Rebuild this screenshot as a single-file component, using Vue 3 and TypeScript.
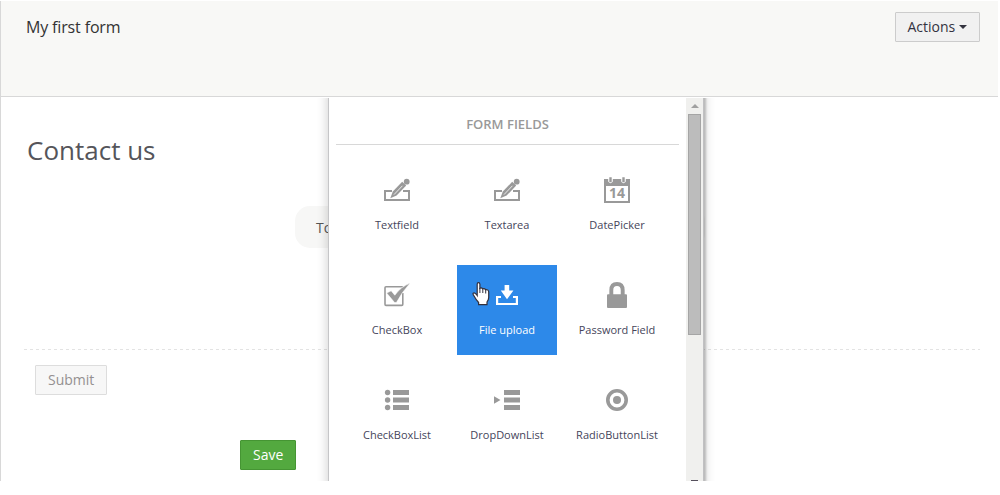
<script setup lang="ts">
import { ref } from 'vue'

type IconName = 'edit' | 'calendar' | 'check' | 'upload' | 'lock' | 'list' | 'dropdown' | 'radio'

interface FieldType {
  label: string
  icon: IconName
}

const fields: FieldType[] = [
  { label: 'Textfield', icon: 'edit' },
  { label: 'Textarea', icon: 'edit' },
  { label: 'DatePicker', icon: 'calendar' },
  { label: 'CheckBox', icon: 'check' },
  { label: 'File upload', icon: 'upload' },
  { label: 'Password Field', icon: 'lock' },
  { label: 'CheckBoxList', icon: 'list' },
  { label: 'DropDownList', icon: 'dropdown' },
  { label: 'RadioButtonList', icon: 'radio' },
]

const active = ref('File upload')
</script>

<template>
  <div class="page">
    <header class="topbar">
      <span class="form-name">My first form</span>
      <button class="btn actions" type="button">Actions<i class="caret"></i></button>
    </header>

    <main class="editor">
      <h1 class="heading">Contact us</h1>
      <div class="drop-hint">To</div>
      <div class="divider"></div>
      <button class="btn submit" type="button">Submit</button>
      <button class="btn save" type="button">Save</button>
    </main>

    <div class="panel-clip">
      <aside class="panel">
        <div class="panel-body">
          <h2 class="panel-title">FORM FIELDS</h2>
          <div class="grid">
            <div
              v-for="field in fields"
              :key="field.label"
              class="cell"
              :class="{ active: field.label === active }"
              @mouseenter="active = field.label"
            >
              <svg class="icon" width="26" height="26" viewBox="0 0 26 26">
                <template v-if="field.icon === 'edit'">
                  <path d="M8 14H1V23H25V14H19" fill="none" stroke="currentColor" stroke-width="2" />
                  <path d="M6.3 21.2L8.8 14.6L18.2 4.8L22.2 8.6L12.6 18.6Z" fill="currentColor" />
                  <path d="M10 17.6L18.4 8.8" stroke="#fff" stroke-width=".8" />
                  <circle cx="22.7" cy="4.7" r="2.9" fill="currentColor" />
                </template>
                <template v-else-if="field.icon === 'calendar'">
                  <path d="M0 2H26V26H0ZM2 9V24H24V9Z" fill="currentColor" fill-rule="evenodd" />
                  <path d="M4.2 0V4.5Q6.5 8 8.8 4.5V0ZM17.2 0V4.5Q19.5 8 21.8 4.5V0Z" fill="#fff" />
                  <path d="M6.5 .3V5.2M19.5 .3V5.2" stroke="currentColor" stroke-width="2.4" />
                  <text x="13" y="21.3" text-anchor="middle" class="day">14</text>
                </template>
                <template v-else-if="field.icon === 'check'">
                  <path d="M18.8 6V5.6Q18.8 4.8 18 4.8H2Q1 4.8 1 5.8V22.2Q1 23.4 2 23.4H17.8Q18.8 23.4 18.8 22.2V11" fill="none" stroke="currentColor" stroke-width="1.6" />
                  <path d="M2.6 11L7.2 8.8L10.8 13.2Q16.5 5 26.2 1Q17.6 10.5 12.4 20.6H10.6Z" fill="currentColor" stroke="#fff" stroke-width=".6" />
                </template>
                <template v-else-if="field.icon === 'upload'">
                  <path d="M7 15H3.1V22H22.9V15H19" fill="none" stroke="currentColor" stroke-width="2.2" />
                  <path d="M10.6 3H15.2V8.6H19.4L13 17.3L6.8 8.6H10.6Z" fill="currentColor" />
                </template>
                <template v-else-if="field.icon === 'lock'">
                  <path d="M7.3 14V8.3Q7.3 2 13 2T18.7 8.3V14" fill="none" stroke="currentColor" stroke-width="3.9" />
                  <rect x="3" y="12.2" width="20" height="13.8" rx="1" fill="currentColor" />
                </template>
                <template v-else-if="field.icon === 'list'">
                  <path d="M9 3H25V8H9ZM9 10.5H25V15.5H9ZM9 18H25V23H9Z" fill="currentColor" />
                  <circle cx="3.6" cy="5.5" r="2.7" fill="currentColor" />
                  <circle cx="3.6" cy="13" r="2.7" fill="currentColor" />
                  <circle cx="3.6" cy="20.5" r="2.7" fill="currentColor" />
                </template>
                <template v-else-if="field.icon === 'dropdown'">
                  <path d="M10 3H26V8H10ZM10 10.5H26V15.5H10ZM10 18H26V23H10ZM0 9.3L6.5 13L0 16.7Z" fill="currentColor" />
                </template>
                <template v-else>
                  <circle cx="13" cy="13" r="9.2" fill="none" stroke="currentColor" stroke-width="3.6" />
                  <circle cx="13" cy="13" r="4" fill="currentColor" />
                </template>
              </svg>
              <span class="label">{{ field.label }}</span>
            </div>
          </div>
        </div>
        <div class="scrollbar">
          <i class="arrow"></i>
          <div class="thumb"></div>
          <i class="mark"></i>
        </div>
      </aside>
    </div>

    <svg class="pointer" width="18" height="24" viewBox="0 0 18 24">
      <path
        d="M5.2 13.5V2.2Q5.2 .7 6.5 .7T7.9 2.2V6.3Q9.5 5.2 10.7 6.8Q12.5 6 13.6 7.6Q16.7 7.4 16.7 10V15.5Q16.7 17.5 15 20V22.6H6.6V20.5Q4 17.5 2.5 14.7Q.4 12 1.2 11.2Q2.8 10 5.2 13.5Z"
        fill="#fff" stroke="#33303c" stroke-width="1.2"
      />
      <path d="M7.9 6V11M10.8 7V11M13.7 8V11.5" stroke="#33303c" stroke-width="1" />
    </svg>
  </div>
</template>

<style>
body {
  margin: 0;
  background: #fff;
}
</style>

<style scoped>
.page {
  position: relative;
  box-sizing: border-box;
  width: 998px;
  height: 481px;
  padding-top: 1px;
  overflow: hidden;
  font-family: "Open Sans", "Noto Sans", sans-serif;
  color: #333;
}
.topbar {
  box-sizing: border-box;
  height: 96px;
  display: flex;
  justify-content: space-between;
  align-items: flex-start;
  padding: 11px 18px 0 25px;
  background: #f8f8f6;
  border-left: 1px solid #d8d8d8;
  border-bottom: 1px solid #d8d8d8;
}
.form-name {
  font-size: 16px;
  line-height: 30px;
  letter-spacing: -0.15px;
}
.btn {
  box-sizing: border-box;
  display: block;
  height: 30px;
  padding: 0 12px;
  border: 1px solid #ccc;
  border-radius: 1px;
  background: #f1f1f1;
  font: 14px/28px "Open Sans", "Noto Sans", sans-serif;
  color: #333;
  white-space: nowrap;
}
.actions {
  width: 85px;
  padding: 0 0 0 11.5px;
  text-align: left;
  color: #33333f;
}
.caret {
  display: inline-block;
  border: 4px solid transparent;
  border-top-color: #33333f;
  border-bottom: 0;
  vertical-align: 3px;
  margin-left: 3.5px;
}
.editor {
  box-sizing: border-box;
  height: 384px;
  border-left: 1px solid #d8d8d8;
  padding: 0 18px 0 23px;
}
.heading {
  margin: 0;
  padding: 33px 0 1px 3px;
  font-size: 26px;
  line-height: 40px;
  font-weight: 400;
  color: #55555a;
}
.drop-hint {
  box-sizing: border-box;
  width: 410px;
  height: 42px;
  margin: 35px 0 0 271px;
  padding-left: 21px;
  border-radius: 15px;
  background: #f7f7f6;
  font-size: 14px;
  line-height: 44px;
  color: #555;
}
.divider {
  height: 1px;
  margin-top: 101px;
  background: repeating-linear-gradient(90deg, #e3e3e3 0 3px, transparent 3px 6px);
}
.submit {
  width: 72px;
  margin: 15px 0 0 11px;
  background: #f7f7f7;
  border-color: #ddd;
  color: #949090;
}
.save {
  width: 56px;
  margin: 45px 0 0 216px;
  background: #53a93f;
  border-color: #459533;
  color: #fff;
}
.panel-clip {
  position: absolute;
  left: 316px;
  top: 98px;
  width: 410px;
  height: 383px;
  padding-left: 12px;
  box-sizing: border-box;
  overflow: hidden;
}
.panel {
  box-sizing: border-box;
  display: flex;
  width: 376px;
  height: 420px;
  margin-top: -10px;
  padding-top: 10px;
  background: #fff;
  border-left: 1px solid #c6c6c8;
  border-right: 1px solid #c0c0c2;
  box-shadow: 2px 0 2px rgba(0, 0, 0, 0.2), 0 0 11px rgba(0, 0, 0, 0.2);
}
.panel-body {
  flex: 1;
  padding: 0 7px;
}
.panel-title {
  margin: 0;
  height: 46px;
  border-bottom: 1px solid #d8d8d8;
  text-align: center;
  font-size: 13px;
  font-weight: 600;
  line-height: 53px;
  color: #999;
}
.grid {
  display: grid;
  grid-template-columns: repeat(3, 100px);
  grid-auto-rows: 90px;
  gap: 15px 10px;
  padding: 15px 0 0 11px;
}
.cell {
  display: flex;
  flex-direction: column;
  align-items: center;
  box-sizing: border-box;
  padding-top: 17px;
  color: #999;
}
.cell.active {
  background: #2d89e9;
  color: #fff;
}
.icon {
  display: block;
}
.day {
  font: 700 14px "Open Sans", "Noto Sans", sans-serif;
  fill: currentColor;
}
.label {
  margin-top: 14px;
  font-size: 11px;
  line-height: 16px;
  color: #45455a;
  white-space: nowrap;
}
.active .label {
  color: #fff;
}
.scrollbar {
  display: flex;
  flex-direction: column;
  align-items: center;
  width: 17px;
  height: 383px;
  background: #f0f0ee;
}
.arrow {
  margin-top: 6px;
  border: 4px solid transparent;
  border-top: 0;
  border-bottom-color: #a0a0a0;
}
.thumb {
  box-sizing: border-box;
  width: 13px;
  height: 221px;
  margin-top: 6px;
  background: #bcbcbc;
  border: 1px solid #a5a5a5;
}
.mark {
  width: 7px;
  height: 1px;
  margin-top: auto;
  background: #55505c;
}
.pointer {
  position: absolute;
  left: 472px;
  top: 282px;
}
</style>
